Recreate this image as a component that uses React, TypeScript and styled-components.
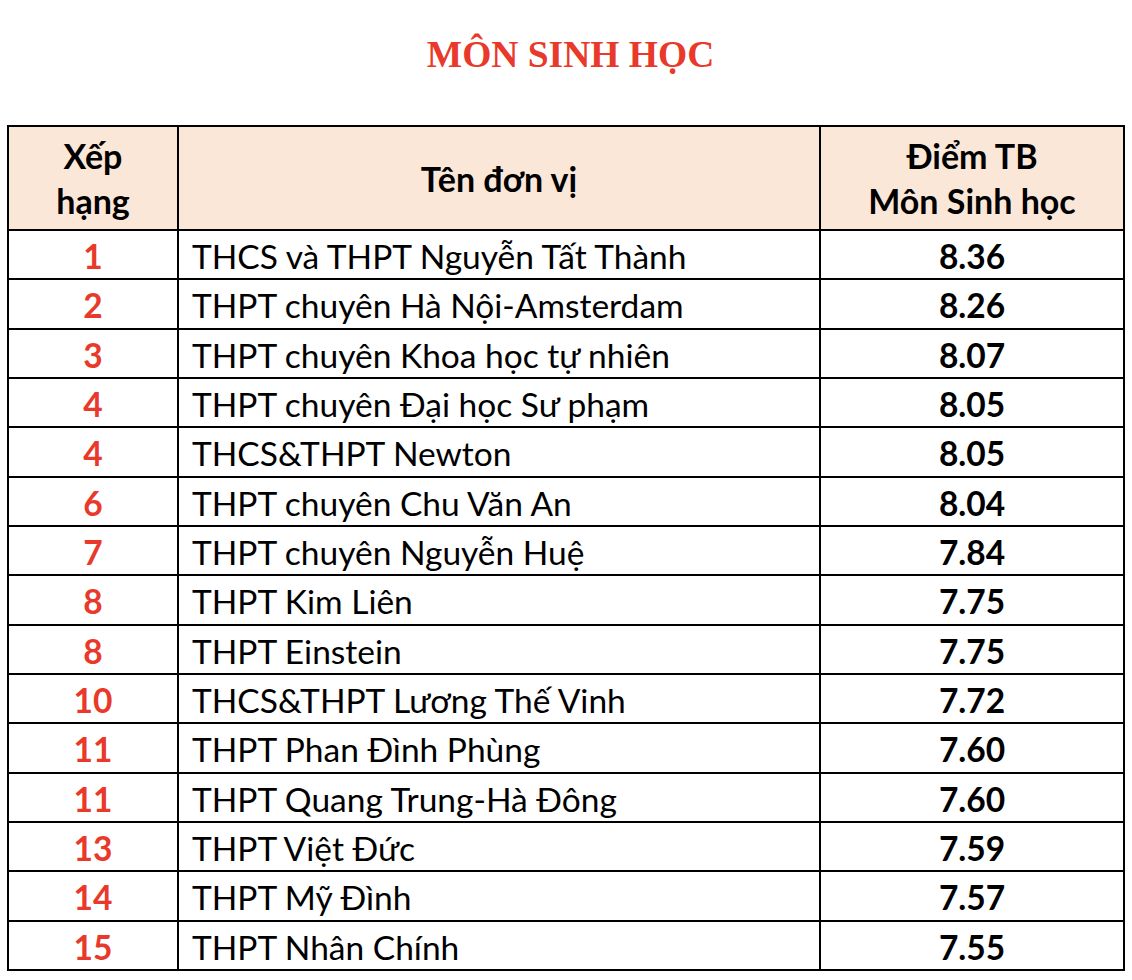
import React from "react";
import styled, { createGlobalStyle } from "styled-components";

const GlobalStyle = createGlobalStyle`
  html, body {
    margin: 0;
    padding: 0;
    background: #fff;
  }
`;

const Page = styled.div`
  width: 1132px;
  padding: 0 8px 0 7px;
  box-sizing: border-box;
`;

const Title = styled.h1`
  margin: 0;
  height: 125px;
  padding-top: 33px;
  padding-left: 10px;
  box-sizing: border-box;
  text-align: center;
  font-family: "Liberation Serif", "Times New Roman", serif;
  font-weight: bold;
  font-size: 37.5px;
  line-height: 44px;
  color: #e8392b;
`;

const Table = styled.table`
  width: 1116px;
  border-collapse: collapse;
  table-layout: fixed;
  font-family: "Lato", "Noto Sans", sans-serif;
  color: #000;
`;

const HeadCell = styled.th`
  height: 102px;
  background: #fbe7d8;
  border: 2px solid #000;
  font-weight: bold;
  font-size: 34px;
  line-height: 45px;
  text-align: center;
  vertical-align: middle;
  padding: 0;
`;

const Cell = styled.td<{ $align?: string; $red?: boolean; $bold?: boolean }>`
  height: 44.33px;
  border: 2px solid #000;
  padding: 3px 0 0 ${(p) => (p.$align === "left" ? "13px" : "0")};
  text-align: ${(p) => p.$align ?? "center"};
  color: ${(p) => (p.$red ? "#e8392b" : "#000")};
  font-weight: ${(p) => (p.$bold ? "bold" : "normal")};
  font-size: 33.5px;
  line-height: 44px;
  white-space: nowrap;
  overflow: hidden;
`;

const rows: [string, string, string][] = [
  ["1", "THCS và THPT Nguyễn Tất Thành", "8.36"],
  ["2", "THPT chuyên Hà Nội-Amsterdam", "8.26"],
  ["3", "THPT chuyên Khoa học tự nhiên", "8.07"],
  ["4", "THPT chuyên Đại học Sư phạm", "8.05"],
  ["4", "THCS&THPT Newton", "8.05"],
  ["6", "THPT chuyên Chu Văn An", "8.04"],
  ["7", "THPT chuyên Nguyễn Huệ", "7.84"],
  ["8", "THPT Kim Liên", "7.75"],
  ["8", "THPT Einstein", "7.75"],
  ["10", "THCS&THPT Lương Thế Vinh", "7.72"],
  ["11", "THPT Phan Đình Phùng", "7.60"],
  ["11", "THPT Quang Trung-Hà Đông", "7.60"],
  ["13", "THPT Việt Đức", "7.59"],
  ["14", "THPT Mỹ Đình", "7.57"],
  ["15", "THPT Nhân Chính", "7.55"],
];

export default function App() {
  return (
    <Page>
      <GlobalStyle />
      <Title>MÔN SINH HỌC</Title>
      <Table>
        <colgroup>
          <col style={{ width: 170 }} />
          <col style={{ width: 642 }} />
          <col style={{ width: 304 }} />
        </colgroup>
        <thead>
          <tr>
            <HeadCell>
              Xếp
              <br />
              hạng
            </HeadCell>
            <HeadCell>Tên đơn vị</HeadCell>
            <HeadCell>
              Điểm TB
              <br />
              Môn Sinh học
            </HeadCell>
          </tr>
        </thead>
        <tbody>
          {rows.map(([rank, name, score], i) => (
            <tr key={i}>
              <Cell $red $bold>
                {rank}
              </Cell>
              <Cell $align="left">{name}</Cell>
              <Cell $bold>{score}</Cell>
            </tr>
          ))}
        </tbody>
      </Table>
    </Page>
  );
}
